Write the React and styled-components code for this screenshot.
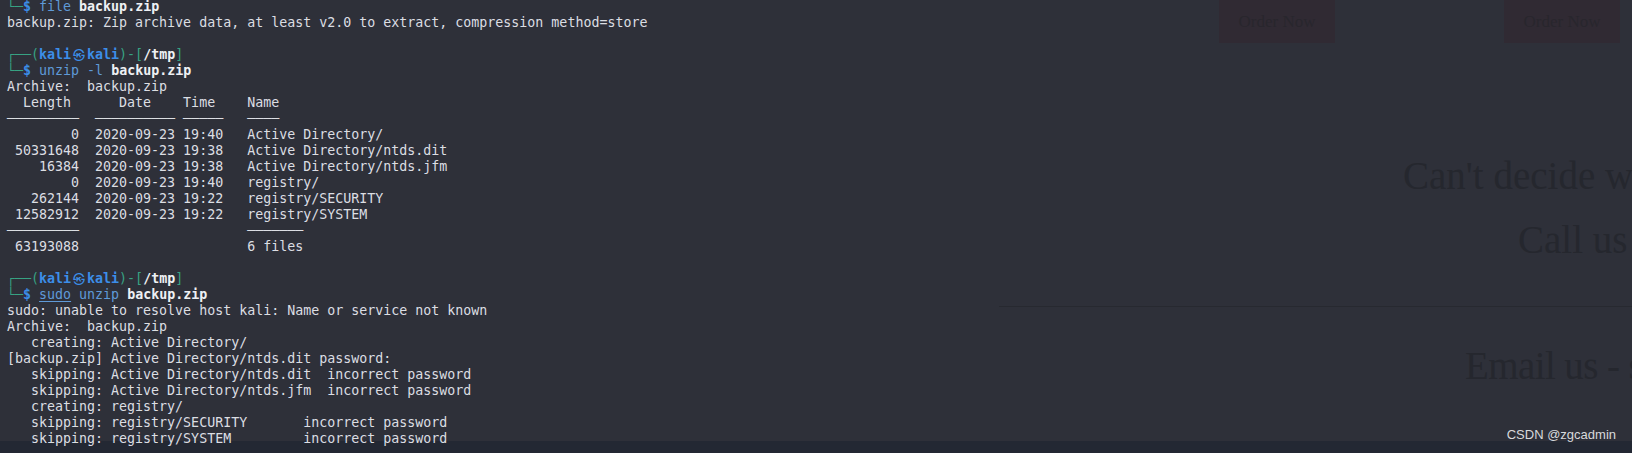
import React from 'react';
import styled, { createGlobalStyle } from 'styled-components';

const Global = createGlobalStyle`
  html, body {
    margin: 0;
    padding: 0;
    background: #2e3039;
  }
`

const Stage = styled.div`
  position: relative;
  width: 1632px;
  height: 453px;
  overflow: hidden;
  display: grid;
  grid-template-columns: 1fr;
  grid-template-rows: 441px 12px;
  background: #2e3039;
`;

const Band = styled.div`
  grid-area: 2 / 1;
  background: #232833;
`;

// faded web page behind the terminal
const GhostSite = styled.div`
  grid-area: 1 / 1;
  margin-left: 999px;
  overflow: hidden;
  display: flex;
  flex-direction: column;
`;

const ButtonRow = styled.div`
  display: flex;
  gap: 169px;
  padding-left: 220px;
`;

const OrderBtn = styled.div`
  flex: none;
  width: 116px;
  height: 43px;
  background: #302a33;
  color: #28262d;
  font-family: "Liberation Serif", serif;
  font-size: 17px;
  display: flex;
  align-items: center;
  justify-content: center;
  padding-top: 1px;
  box-sizing: border-box;
`;

const Heading = styled.div`
  margin-top: ${p => p.$gap}px;
  padding-left: ${p => p.$indent}px;
  font-family: "Liberation Serif", serif;
  font-size: 39px;
  line-height: 48px;
  letter-spacing: ${p => p.$tight ? '-0.6px' : '0'};
  color: #25272e;
  white-space: nowrap;
`;

const Divider = styled.hr`
  margin: 42px 0 0;
  border: 0;
  border-top: 1px solid #272930;
  height: 0;
`;

const Terminal = styled.div`
  grid-area: 1 / 1 / 3 / 2;
  z-index: 1;
  margin-top: -1px;
  padding-left: 7px;
  font-family: "DejaVu Sans Mono", "Liberation Mono", monospace;
  font-size: 13.3px;
  color: #dcdee3;
`;

const Line = styled.div`
  height: 16px;
  line-height: 16px;
  white-space: pre;
`;

const Frame = styled.span`
  color: #37a283;
`;

const User = styled.span`
  color: #3c8ee8;
  font-weight: bold;
`;

const AtMark = styled.span`
  display: inline-block;
  width: 16px;
  text-align: center;
  vertical-align: top;
  color: #3c8ee8;
  font-family: "Noto Sans CJK KR", sans-serif;
  font-size: 12px;
  font-weight: bold;
`;

const Path = styled.span`
  color: #eef0f4;
  font-weight: bold;
`;

const Dollar = styled.span`
  color: #3c8ee8;
  font-weight: bold;
`;

const Cmd = styled.span`
  color: #5f9ad8;
  text-decoration: ${p => (p.$under ? 'underline' : 'none')};
  text-underline-offset: 2px;
`;

const Arg = styled.span`
  color: #eef0f4;
  font-weight: bold;
`;

const Watermark = styled.div`
  position: absolute;
  right: 16px;
  bottom: 10px;
  z-index: 2;
  font-family: "Liberation Sans", Arial, sans-serif;
  font-size: 13px;
  line-height: 16px;
  color: #d8d9dc;
`;

const PromptHead = () => (
  <Line>
    <Frame>┌──(</Frame>
    <User>kali</User>
    <AtMark>㉿</AtMark>
    <User>kali</User>
    <Frame>)-[</Frame>
    <Path>/tmp</Path>
    <Frame>]</Frame>
  </Line>
);

const PromptCmd = ({ children }) => (
  <Line>
    <Frame>└─</Frame>
    <Dollar>$</Dollar> {children}
  </Line>
);

const listing = [
  '  Length      Date    Time    Name',
  '─────────  ────────── ─────   ────',
  '        0  2020-09-23 19:40   Active Directory/',
  ' 50331648  2020-09-23 19:38   Active Directory/ntds.dit',
  '    16384  2020-09-23 19:38   Active Directory/ntds.jfm',
  '        0  2020-09-23 19:40   registry/',
  '   262144  2020-09-23 19:22   registry/SECURITY',
  ' 12582912  2020-09-23 19:22   registry/SYSTEM',
  '─────────                     ───────',
  ' 63193088                     6 files',
];

const unzipOut = [
  'sudo: unable to resolve host kali: Name or service not known',
  'Archive:  backup.zip',
  '   creating: Active Directory/',
  '[backup.zip] Active Directory/ntds.dit password: ',
  '   skipping: Active Directory/ntds.dit  incorrect password',
  '   skipping: Active Directory/ntds.jfm  incorrect password',
  '   creating: registry/',
  '   skipping: registry/SECURITY       incorrect password',
  '   skipping: registry/SYSTEM         incorrect password',
];

export default function App() {
  return (
    <Stage>
      <Global />
      <GhostSite>
        <ButtonRow>
          <OrderBtn>Order Now</OrderBtn>
          <OrderBtn>Order Now</OrderBtn>
        </ButtonRow>
        <Heading $gap={109} $indent={404}>Can't decide what to order?</Heading>
        <Heading $gap={16} $indent={519}>Call us</Heading>
        <Divider />
        <Heading $gap={35} $indent={466} $tight>Email us - sales@example.com</Heading>
      </GhostSite>
      <Band />

      <Terminal>
        <PromptCmd><Cmd>file</Cmd> <Arg>backup.zip</Arg></PromptCmd>
        <Line>backup.zip: Zip archive data, at least v2.0 to extract, compression method=store</Line>
        <Line> </Line>
        <PromptHead />
        <PromptCmd><Cmd>unzip</Cmd> <Cmd>-l</Cmd> <Arg>backup.zip</Arg></PromptCmd>
        <Line>Archive:  backup.zip</Line>
        {listing.map((l, i) => <Line key={'l' + i}>{l}</Line>)}
        <Line> </Line>
        <PromptHead />
        <PromptCmd><Cmd $under>sudo</Cmd> <Cmd>unzip</Cmd> <Arg>backup.zip</Arg></PromptCmd>
        {unzipOut.map((l, i) => <Line key={'u' + i}>{l}</Line>)}
      </Terminal>

      <Watermark>CSDN @zgcadmin</Watermark>
    </Stage>
  );
}
